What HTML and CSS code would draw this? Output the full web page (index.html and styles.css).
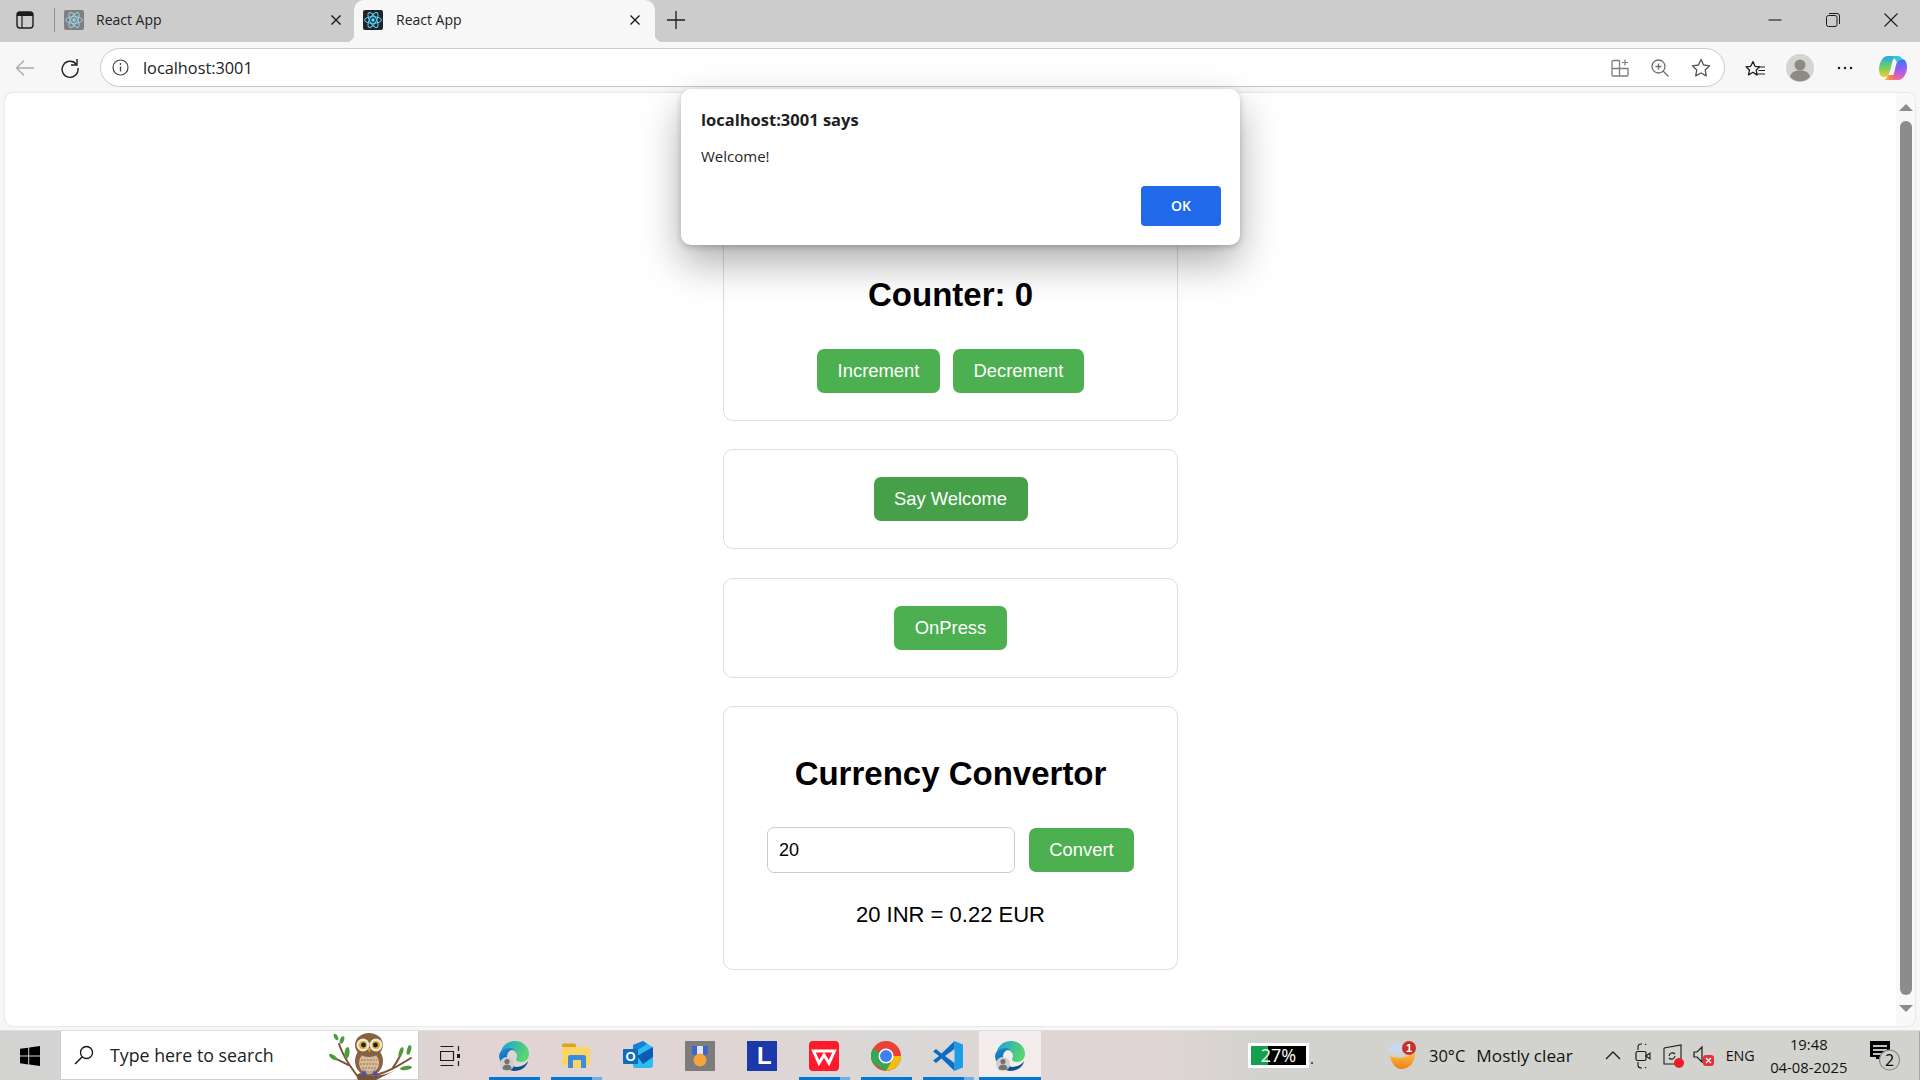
FILE: index.html
```html
<!DOCTYPE html>
<html lang="en">
<head>
  <meta charset="UTF-8" />
  <title>React App</title>
  <link rel="stylesheet" href="styles.css">
</head>
<body>
  <svg class="defs" width="0" height="0">
    <defs>
      <symbol id="react" viewBox="0 0 20 20">
        <rect width="20" height="20" rx="2" fill="#20232a"/>
        <g fill="none" stroke="#61dafb" stroke-width="1">
          <ellipse cx="10" cy="10" rx="8.4" ry="3.3"/>
          <ellipse cx="10" cy="10" rx="8.4" ry="3.3" transform="rotate(60 10 10)"/>
          <ellipse cx="10" cy="10" rx="8.4" ry="3.3" transform="rotate(120 10 10)"/>
        </g>
        <circle cx="10" cy="10" r="1.7" fill="#61dafb"/>
      </symbol>
      <linearGradient id="edgeTop" x1="0" y1="0" x2="1" y2="0.4">
        <stop offset="0" stop-color="#1a9fdd"/>
        <stop offset="1" stop-color="#5ad66f"/>
      </linearGradient>
      <linearGradient id="edgeLeft" x1="0" y1="0" x2="0.6" y2="1">
        <stop offset="0" stop-color="#1b8fd8"/>
        <stop offset="1" stop-color="#0f5ea8"/>
      </linearGradient>
      <symbol id="edge" viewBox="0 0 30 30">
        <path d="M2 10C4 4 9 0 16 0c8 0 14 6 14 13 0 5-4 8-8 8-3 0-5-1-5-2.500 0-1 1-1.500 1-3.500 0-4-4-6.500-8-6.500-3 0-6 0-8 1.500z" fill="url(#edgeTop)"/>
        <path d="M2 10c3-3 10-4 14-1-4-1-8 2-8 6.500 0 5 3 9 8 10.500-7 2-15-2-16-10.500 0-2 1-4 2-5.500z" fill="url(#edgeLeft)"/>
        <path d="M14 25.500c6 1.500 12-1 15-5.500-1 6-7 10-14 10-2 0-4-1-5-2z" fill="#0c4f94"/>
        <circle cx="8" cy="23" r="7" fill="#cfcfcf"/>
        <circle cx="8" cy="20.500" r="2.600" fill="#737373"/>
        <path d="M3.500 28c0-3 2-4.500 4.500-4.500s4.500 1.500 4.500 4.500c-2 1.500-7 1.500-9 0z" fill="#737373"/>
      </symbol>
    </defs>
  </svg>

  <div class="tabstrip">
    <button class="strip-icon sidebar-toggle">
      <svg width="18" height="18" viewBox="0 0 18 18"><rect x="1" y="1" width="16" height="16" rx="3" fill="none" stroke="#1c1c1c" stroke-width="1.400"/><path d="M1 5V4a3 3 0 0 1 3-3h10a3 3 0 0 1 3 3v1z" fill="#1c1c1c"/><path d="M6 5v12" stroke="#1c1c1c" stroke-width="1.200"/></svg>
    </button>
    <span class="tab-sep"></span>
    <div class="tab tab-idle">
      <svg class="favicon" width="20" height="20"><use href="#react"/></svg>
      <span class="tab-title">React App</span>
      <svg class="tab-close" width="12" height="12" viewBox="0 0 12 12"><path d="M1.500 1.500l9 9M10.500 1.500l-9 9" stroke="#1a1a1a" stroke-width="1.400"/></svg>
    </div>
    <div class="tab tab-active">
      <svg class="favicon" width="20" height="20"><use href="#react"/></svg>
      <span class="tab-title">React App</span>
      <svg class="tab-close" width="12" height="12" viewBox="0 0 12 12"><path d="M1.500 1.500l9 9M10.500 1.500l-9 9" stroke="#1a1a1a" stroke-width="1.400"/></svg>
    </div>
    <svg class="new-tab" width="18" height="18" viewBox="0 0 18 18"><path d="M9 0v18M0 9h18" stroke="#1c1c1c" stroke-width="1.300"/></svg>
    <div class="window-controls">
      <svg width="14" height="14" viewBox="0 0 14 14"><path d="M0.500 7h13" stroke="#1c1c1c" stroke-width="1.100"/></svg>
      <svg width="14" height="14" viewBox="0 0 14 14"><rect x="0.500" y="2.500" width="10.500" height="11" rx="2" fill="none" stroke="#1c1c1c"/><path d="M3 0.500h8a2.500 2.500 0 0 1 2.500 2.500v8" fill="none" stroke="#1c1c1c"/></svg>
      <svg width="14" height="14" viewBox="0 0 14 14"><path d="M0.500 0.500l13 13M13.500 0.500l-13 13" stroke="#1c1c1c" stroke-width="1.100"/></svg>
    </div>
  </div>

  <div class="toolbar">
    <svg class="tool-back" width="20" height="18" viewBox="0 0 20 18"><path d="M19 9H1.500M9 1.500L1.500 9 9 16.500" fill="none" stroke="#a9a9a9" stroke-width="1.300"/></svg>
    <svg class="tool-reload" width="20" height="20" viewBox="0 0 20 20"><path d="M16.500 6.500A8 8 0 1 0 18 10" fill="none" stroke="#1f1f1f" stroke-width="1.400"/><path d="M17 1v6h-6" fill="none" stroke="#1f1f1f" stroke-width="1.400"/></svg>
    <div class="omnibox">
      <svg width="17" height="17" viewBox="0 0 17 17"><circle cx="8.500" cy="8.500" r="7.500" fill="none" stroke="#444" stroke-width="1.200"/><path d="M8.500 7.500v5" stroke="#444" stroke-width="1.300"/><circle cx="8.500" cy="5" r="0.900" fill="#444"/></svg>
      <span class="url">localhost:3001</span>
      <div class="omni-actions">
        <svg width="18" height="18" viewBox="0 0 18 18"><path d="M8.500 1.500H2a1 1 0 0 0-1 1V16a1 1 0 0 0 1 1h14a1 1 0 0 0 1-1V9.500H1M8.500 1.500V17" fill="none" stroke="#7d7d7d" stroke-width="1.300"/><path d="M14 0.500v6M11 3.500h6" stroke="#7d7d7d" stroke-width="1.200"/></svg>
        <svg width="18" height="18" viewBox="0 0 18 18"><circle cx="7.500" cy="7.500" r="6.500" fill="none" stroke="#6d6d6d" stroke-width="1.300"/><path d="M12 12l5.500 5.500M7.500 4.500v6M4.500 7.500h6" stroke="#6d6d6d" stroke-width="1.300"/></svg>
        <svg width="20" height="20" viewBox="0 0 20 20"><path d="M10 1.500l2.600 5.500 6 .8-4.400 4.100 1.100 6L10 15l-5.300 2.900 1.100-6L1.400 7.800l6-.8z" fill="none" stroke="#555" stroke-width="1.300" stroke-linejoin="round"/></svg>
      </div>
    </div>
    <div class="tool-actions">
      <svg class="tool-fav" width="20" height="20" viewBox="0 0 20 20"><path d="M8 1.500l2 4.800 4.600.5-3.400 3.300.9 5L8 12.300l-4.500 2.600 1-5L1 6.800l4.700-.5z" fill="none" stroke="#1f1f1f" stroke-width="1.300" stroke-linejoin="round" transform="translate(0 2)"/><path d="M13 9h7M13.500 12.500h6.500M12 16h8" stroke="#1f1f1f" stroke-width="1.200"/></svg>
      <svg class="tool-avatar" width="28" height="28" viewBox="0 0 28 28"><circle cx="14" cy="14" r="14" fill="#d6d4d0"/><circle cx="14" cy="11" r="5.500" fill="#8e8a85"/><path d="M4 23c1-5 5-6.500 10-6.500S23 18 24 23a14 14 0 0 1-20 0z" fill="#8e8a85"/></svg>
      <svg class="tool-more" width="16" height="4" viewBox="0 0 16 4"><circle cx="2" cy="2" r="1.300" fill="#222"/><circle cx="8" cy="2" r="1.300" fill="#222"/><circle cx="14" cy="2" r="1.300" fill="#222"/></svg>
      <svg class="tool-copilot" width="28" height="28" viewBox="0 0 28 28">
        <defs>
          <linearGradient id="copA" x1="0" y1="0" x2="0" y2="1"><stop offset="0" stop-color="#28a8ea"/><stop offset="0.55" stop-color="#6fd35c"/><stop offset="1" stop-color="#f8c62e"/></linearGradient>
          <linearGradient id="copB" x1="0" y1="0" x2="0" y2="1"><stop offset="0" stop-color="#2f7bf2"/><stop offset="0.55" stop-color="#a25cf0"/><stop offset="1" stop-color="#f86a9a"/></linearGradient>
          <linearGradient id="copC" x1="0" y1="0" x2="1" y2="0"><stop offset="0" stop-color="#f6b23c"/><stop offset="1" stop-color="#f0556f"/></linearGradient>
        </defs>
        <path d="M9 2h9c-3 1-4 3-5 7l-2 8c-1 4-3 6-6 6-3 0-5-3-5-8 0-5 3-13 9-13z" fill="url(#copA)"/>
        <path d="M19 26h-9c3-1 4-3 5-7l2-8c1-4 3-6 6-6 3 0 5 3 5 8 0 5-3 13-9 13z" fill="url(#copB)"/>
        <path d="M9 21h9c-1 3-4 5-7 5H6c1-1 2-3 3-5z" fill="url(#copC)"/>
        <path d="M12 2h7c2 0 3 1 4 3-2 0-4 1-5 4-1-3-3-6-6-7z" fill="#2fc6d8"/>
      </svg>
    </div>
  </div>

  <div class="viewport">
    <main class="page">
      <section class="card card-counter">
        <h2>Counter: 0</h2>
        <div class="row">
          <button class="btn btn-increment">Increment</button>
          <button class="btn btn-decrement">Decrement</button>
        </div>
      </section>
      <section class="card card-plain">
        <button class="btn btn-hover">Say Welcome</button>
      </section>
      <section class="card card-plain">
        <button class="btn btn-press">OnPress</button>
      </section>
      <section class="card card-currency">
        <h2>Currency Convertor</h2>
        <div class="row row-wide">
          <input class="amount" type="text" value="20">
          <button class="btn btn-convert">Convert</button>
        </div>
        <p class="result">20 INR = 0.22 EUR</p>
      </section>
    </main>
    <div class="scrollbar">
      <span class="arrow arrow-up"></span>
      <span class="thumb"></span>
      <span class="arrow arrow-down"></span>
    </div>
  </div>

  <div class="dialog">
    <div class="dialog-title">localhost:3001 says</div>
    <div class="dialog-msg">Welcome!</div>
    <button class="dialog-ok">OK</button>
  </div>

  <footer class="taskbar">
    <div class="start">
      <svg width="20" height="20" viewBox="0 0 20 20"><path d="M0 2.800l8.200-1.100v7.900H0zM9.200 1.500L20 0v9.600H9.200zM0 10.600h8.200v7.900L0 17.300zM9.200 10.600H20V20L9.200 18.500z" fill="#000"/></svg>
    </div>
    <div class="search">
      <svg width="20" height="20" viewBox="0 0 20 20"><circle cx="12.500" cy="7.500" r="6" fill="none" stroke="#111" stroke-width="1.300"/><path d="M8 12l-7 7" stroke="#111" stroke-width="1.500"/></svg>
      <span class="search-text">Type here to search</span>
      <svg class="owl" width="90" height="50" viewBox="0 0 90 50">
        <path d="M34 50C28 40 20 34 13 14M22 35C17 32 12 30 8 28M50 45C62 42 72 36 85 28M66 39c3-4 6-9 8-13" fill="none" stroke="#7a5236" stroke-width="2" stroke-linecap="round"/>
        <path d="M32 50c-3-6 0-8 8-6 10 3 20 1 30-4l-20 10z" fill="#7a5236"/>
        <g fill="#4e9a3c">
          <ellipse cx="10" cy="7" rx="1.800" ry="3.500" transform="rotate(-30 10 7)"/>
          <ellipse cx="16" cy="10" rx="2" ry="4" transform="rotate(20 16 10)"/>
          <ellipse cx="7" cy="27" rx="2" ry="4.500" transform="rotate(-55 7 27)"/>
          <ellipse cx="21" cy="23" rx="2.500" ry="6" transform="rotate(8 21 23)"/>
          <ellipse cx="75" cy="22" rx="2" ry="5" transform="rotate(18 75 22)"/>
          <ellipse cx="83" cy="20" rx="2" ry="5" transform="rotate(15 83 20)"/>
          <ellipse cx="80" cy="38" rx="6" ry="2" transform="rotate(-8 80 38)"/>
        </g>
        <ellipse cx="43" cy="31" rx="14" ry="15" fill="#8a6142"/>
        <ellipse cx="43" cy="33" rx="10" ry="11" fill="#d8bb98"/>
        <path d="M35 30h16M34 34h18M36 38h14M38 42h10" stroke="#9a7452" stroke-width="1" stroke-dasharray="2 1"/>
        <ellipse cx="43" cy="15" rx="14" ry="12" fill="#86603f"/>
        <ellipse cx="37" cy="15" rx="6.500" ry="6.500" fill="#efe6d8"/>
        <ellipse cx="50" cy="15" rx="6.500" ry="6.500" fill="#efe6d8"/>
        <circle cx="37" cy="15" r="4" fill="#d9b11f"/>
        <circle cx="50" cy="15" r="4" fill="#d9b11f"/>
        <circle cx="37.500" cy="15" r="2.400" fill="#1b1f33"/>
        <circle cx="49.500" cy="15" r="2.400" fill="#1b1f33"/>
        <path d="M41.500 18h3.500l-1.700 5z" fill="#d6a035"/>
        <path d="M36 45l1 -3 1 3 1-3 1 3M47 45l1-3 1 3 1-3 1 3" fill="none" stroke="#4a52a8" stroke-width="1.600"/>
      </svg>
    </div>
    <div class="tile tile-taskview">
      <svg width="20" height="20" viewBox="0 0 20 20"><path d="M0.500 0.500h13M0.500 19.500h13M0.500 5.500h13v9h-13z" fill="none" stroke="#1a1a1a" stroke-width="1.200"/><path d="M18.500 0v5M18.500 15v5" stroke="#1a1a1a" stroke-width="1.200"/><path d="M17 8h3v4h-3z" fill="#1a1a1a"/></svg>
    </div>
    <div class="tile tile-on"><svg width="30" height="30"><use href="#edge"/></svg></div>
    <div class="tile tile-on tile-multi">
      <svg width="30" height="30" viewBox="0 0 30 30"><path d="M1 4.500A1.500 1.500 0 0 1 2.500 3h11l3 3h10A2.500 2.500 0 0 1 29 8.500V23a2 2 0 0 1-2 2H3a2 2 0 0 1-2-2z" fill="#fbd667"/><path d="M1 6V4a1.500 1.500 0 0 1 1.500-1.500H13a2 2 0 0 1 2 2V6z" fill="#e0a419"/><path d="M7 27V16a2 2 0 0 1 2-2h14a2 2 0 0 1 2 2v11h-5v-8h-8v8z" fill="#3a8dde"/><path d="M12 19h8v8h-8z" fill="#fbd667"/></svg>
    </div>
    <div class="tile">
      <svg width="30" height="30" viewBox="0 0 30 30"><path d="M10 4l10-4 8 5c1.500 1 2 2 2 4v15c0 2-1 3-3 3H12c-2 0-2-2-2-3z" fill="#2dbcf2"/><path d="M10 4l10-4 4 3-14 9z" fill="#1a7fd4"/><path d="M14 15L30 6v10L20 23z" fill="#0a5cb5"/><rect y="8" width="15" height="15" rx="1" fill="#0f6cbd"/><text x="7.500" y="20" class="svg-o">O</text></svg>
    </div>
    <div class="tile">
      <svg width="30" height="30" viewBox="0 0 30 30"><rect width="30" height="30" fill="#7c7c7c"/><path d="M7 5h16v7l-5 5h-6l-5-5z" fill="#3f63cf"/><path d="M12 5h6v11h-6z" fill="#dfe6f7"/><circle cx="15" cy="19" r="6.500" fill="#f6a339"/></svg>
    </div>
    <div class="tile">
      <div class="app-l">L</div>
    </div>
    <div class="tile tile-on tile-multi">
      <svg width="30" height="30" viewBox="0 0 30 30"><rect width="30" height="30" rx="4" fill="#ff1a2c"/><path d="M4.500 10L10 22l5-8 5 8 5.500-12z" fill="none" stroke="#fff" stroke-width="3" stroke-linejoin="miter"/></svg>
    </div>
    <div class="tile tile-on">
      <svg width="30" height="30" viewBox="0 0 30 30"><circle cx="15" cy="15" r="15" fill="#ea4335"/><path d="M15 15L2 22.500A15 15 0 0 1 2 7.500z" fill="#34a853"/><path d="M15 15h15a15 15 0 0 1-15 15L2 22.500z" fill="#34a853"/><path d="M15 15h15a15 15 0 0 1-15 15l7.500-13z" fill="#fbbc05"/><circle cx="15" cy="15" r="7.500" fill="#fff"/><circle cx="15" cy="15" r="6" fill="#3f7ff0"/></svg>
    </div>
    <div class="tile tile-on tile-multi">
      <svg width="30" height="30" viewBox="0 0 30 30"><path d="M21.500 0L30 3.500v23L21.500 30z" fill="#1e9ce8"/><path d="M21.500 0L8.500 12.500 3 8 0 10.500 6 15l-6 4.500L3 22l5.500-4.500L21.500 30v-8L12 15l9.500-7z" fill="#0a6fc2"/></svg>
    </div>
    <div class="tile tile-on tile-current"><svg width="30" height="30"><use href="#edge"/></svg></div>

    <div class="tray">
      <div class="battery"><span>27%</span></div>
      <span class="battery-dot"></span>
      <svg class="weather" width="30" height="30" viewBox="0 0 30 30">
        <defs><linearGradient id="sun" x1="0" y1="0" x2="0" y2="1"><stop offset="0" stop-color="#fbbf3f"/><stop offset="1" stop-color="#f07f1c"/></linearGradient></defs>
        <path d="M2 15c6 3 16 2 25-3 0 9-5 16-14 16C7 28 3 21 2 15z" fill="url(#sun)"/>
        <path d="M1 8a3 3 0 0 1 3-3c1-3 7-4 8 0 2 0 4 1 4 3 0 2-1 3-3 3H4a3 3 0 0 1-3-3z" fill="#c5d9f1"/>
        <circle cx="21" cy="7" r="7" fill="#c9302c"/>
        <text x="21" y="11" class="svg-badge">1</text>
      </svg>
      <span class="temp">30°C</span>
      <span class="sky">Mostly clear</span>
      <svg class="caret" width="16" height="9" viewBox="0 0 16 9"><path d="M1 8l7-7 7 7" fill="none" stroke="#1a1a1a" stroke-width="1.300"/></svg>
      <svg class="meet" width="16" height="26" viewBox="0 0 16 26"><path d="M3 7V4a3 3 0 0 1 3-3h1M3 19v3a3 3 0 0 0 3 3h1M10 1a3 3 0 0 1 1 1M10 25a3 3 0 0 0 1-1" fill="none" stroke="#1a1a1a" stroke-width="1.100"/><rect x="1" y="8.500" width="10" height="9" rx="1.500" fill="none" stroke="#1a1a1a" stroke-width="1.200"/><path d="M11 13l4-3v6z" fill="none" stroke="#1a1a1a" stroke-width="1.100"/></svg>
      <svg class="sync" width="22" height="26" viewBox="0 0 22 26"><path d="M1 5l17-3v15" fill="none" stroke="#1a1a1a" stroke-width="1.100"/><path d="M1 5v16h11" fill="none" stroke="#1a1a1a" stroke-width="1.100"/><path d="M6 13a3.500 3.500 0 0 1 6-2M12 13a3.500 3.500 0 0 1-6 2" fill="none" stroke="#1a1a1a" stroke-width="1.100"/><circle cx="16" cy="20" r="5" fill="#ee1c25"/></svg>
      <svg class="speaker" width="22" height="22" viewBox="0 0 22 22"><path d="M1 7h3l5-5v15l-5-5H1z" fill="none" stroke="#1a1a1a" stroke-width="1.200"/><rect x="10" y="10" width="11" height="11" rx="3" fill="#e3303a"/><path d="M13 13l5 5M18 13l-5 5" stroke="#fff" stroke-width="1.300"/></svg>
      <span class="lang">ENG</span>
      <div class="clock"><span>19:48</span><span>04-08-2025</span></div>
      <svg class="notify" width="32" height="32" viewBox="0 0 32 32"><path d="M0 1h20v18H6v-2H0z" fill="#000"/><path d="M3 6h14M3 10h14M3 14h14" stroke="#fff" stroke-width="1.300"/><circle cx="19.500" cy="20" r="10" fill="#cfd0cc" stroke="#8a8a8a" stroke-width="1.200"/><text x="19.500" y="26" class="svg-two">2</text></svg>
    </div>
  </footer>
</body>
</html>
```

FILE: styles.css
```css
* {
  box-sizing: border-box;
}

html, body {
  margin: 0;
  height: 100%;
}

body {
  width: 1920px;
  height: 1080px;
  overflow: hidden;
  display: flex;
  flex-direction: column;
  background: #f7f7f7;
  font-family: "Liberation Sans", Arial, sans-serif;
  position: relative;
}

svg {
  display: block;
  flex: none;
}

.defs {
  position: absolute;
}

/* tab strip */
.tabstrip {
  height: 42px;
  flex: none;
  display: flex;
  align-items: center;
  padding-bottom: 2px;
  background: #cccccc;
  font-family: "Open Sans", "Noto Sans", sans-serif;
}

.strip-icon {
  width: 16px;
  height: 18px;
  margin-left: 16px;
  padding: 0;
  border: none;
  background: none;
}

.tab-sep {
  width: 1px;
  height: 24px;
  margin-left: 22px;
  background: #8c8c8c;
}

.tab {
  width: 299px;
  height: 42px;
  margin-bottom: -2px;
  display: flex;
  align-items: center;
  padding: 0 12px 3px 9px;
  font-size: 14px;
  color: #222;
  flex: none;
}

.tab-idle .favicon {
  opacity: 0.45;
}

.tab-active {
  width: 301px;
  padding-right: 14px;
  background: #f7f7f7;
  border-radius: 10px 10px 0 0;
  position: relative;
}

.tab-active::before,
.tab-active::after {
  content: "";
  position: absolute;
  bottom: 0;
  width: 8px;
  height: 8px;
}

.tab-active::before {
  left: -8px;
  background: radial-gradient(circle at 0 0, transparent 8px, #f7f7f7 8.500px);
}

.tab-active::after {
  right: -8px;
  background: radial-gradient(circle at 100% 0, transparent 8px, #f7f7f7 8.500px);
}

.tab-title {
  margin-left: 13px;
  flex: 1;
}

.tab-idle .tab-title {
  margin-left: 12px;
}

.new-tab {
  margin-left: 12px;
}

.window-controls {
  margin-left: auto;
  margin-right: 22px;
  display: flex;
  gap: 44px;
}

/* toolbar */
.toolbar {
  height: 51px;
  flex: none;
  display: flex;
  align-items: center;
}

.tool-back {
  margin-left: 15px;
}

.tool-reload {
  margin-left: 25px;
}

.omnibox {
  width: 1625px;
  height: 39px;
  margin-left: 20px;
  display: flex;
  align-items: center;
  padding: 0 13px 0 11px;
  background: #fff;
  border: 1px solid #c9c9c9;
  border-radius: 20px;
}

.url {
  margin-left: 14px;
  font-family: "Open Sans", "Noto Sans", sans-serif;
  font-size: 16.300px;
  color: #222;
}

.omni-actions {
  margin-left: auto;
  display: flex;
  align-items: center;
  gap: 22px;
}

.tool-actions {
  display: flex;
  align-items: center;
}

.tool-fav {
  margin-left: 20px;
}

.tool-avatar {
  margin-left: 21px;
}

.tool-more {
  margin-left: 23px;
}

.tool-copilot {
  margin-left: 26px;
}

/* page */
.viewport {
  height: 933px;
  flex: none;
  margin: 0 5px 0 5px;
  display: flex;
  background: #fff;
  border-radius: 8px;
  box-shadow: 0 0 2px rgba(0,0,0,0.2);
  overflow: hidden;
}

.page {
  flex: 1;
  padding-top: 134px;
  display: flex;
  flex-direction: column;
  align-items: center;
  gap: 28.500px;
}

.scrollbar {
  width: 19px;
  flex: none;
  display: flex;
  flex-direction: column;
  align-items: center;
  background: #f9f9f9;
}

.thumb {
  width: 12px;
  height: 874px;
  margin: 10px 0 10px;
  border-radius: 6px;
  background: #8c8c8c;
}

.arrow {
  width: 0;
  height: 0;
  border-left: 7px solid transparent;
  border-right: 7px solid transparent;
}

.arrow-up {
  margin-top: 11px;
  border-bottom: 7px solid #8c8c8c;
}

.arrow-down {
  border-top: 7px solid #8c8c8c;
}

.card {
  width: 455px;
  border: 1px solid #dddddd;
  border-radius: 10px;
  display: flex;
  flex-direction: column;
  align-items: center;
  background: transparent;
}

.card h2 {
  margin: 0;
  font-size: 33px;
  line-height: 38px;
  font-weight: 700;
  color: #000;
}

.card-counter {
  height: 193.500px;
  padding-top: 48px;
}

.card-counter h2 {
  margin-bottom: 35px;
}

.card-plain {
  height: 100px;
  justify-content: center;
}

.card-currency {
  height: 264px;
  padding-top: 48px;
}

.card-currency h2 {
  margin-bottom: 34px;
}

.row {
  display: flex;
  align-items: center;
  justify-content: center;
  gap: 13px;
}

.row-wide {
  gap: 14px;
}

.btn {
  height: 44px;
  padding: 0;
  border: none;
  border-radius: 7px;
  background: #4caf50;
  color: #fff;
  font-family: "Liberation Sans", Arial, sans-serif;
  font-size: 18.400px;
}

.btn-increment {
  width: 123px;
}

.btn-decrement {
  width: 131px;
}

.btn-hover {
  width: 154px;
  background: #45a049;
}

.btn-press {
  width: 113px;
}

.btn-convert {
  width: 105px;
}

.amount {
  width: 248px;
  height: 46px;
  padding: 0 11px;
  border: 1px solid #cccccc;
  border-radius: 7px;
  font-family: "Liberation Sans", Arial, sans-serif;
  font-size: 18px;
  color: #000;
  outline: none;
}

.result {
  margin: 29px 0 0;
  font-size: 22px;
  line-height: 26px;
  color: #000;
}

/* alert */
.dialog {
  position: absolute;
  left: 681px;
  top: 89px;
  width: 559px;
  height: 156px;
  padding: 20px 19px 19px 20px;
  display: flex;
  flex-direction: column;
  background: #fff;
  border-radius: 10px;
  box-shadow: 0 18px 40px rgba(0,0,0,0.32), 0 2px 6px rgba(0,0,0,0.2);
  font-family: "Open Sans", "Noto Sans", sans-serif;
  color: #1f1f1f;
}

.dialog-title {
  font-size: 16.500px;
  line-height: 22px;
  font-weight: 700;
}

.dialog-msg {
  margin-top: 15px;
  font-size: 15px;
  line-height: 20px;
}

.dialog-ok {
  margin-top: auto;
  align-self: flex-end;
  width: 80px;
  height: 40px;
  padding: 0 0 2px;
  border: none;
  border-radius: 4px;
  background: #2169eb;
  color: #fff;
  font-family: "Open Sans", "Noto Sans", sans-serif;
  font-size: 14px;
  font-weight: 600;
}

/* taskbar */
.taskbar {
  height: 50px;
  margin-top: 4px;
  flex: none;
  display: flex;
  align-items: stretch;
  background: linear-gradient(90deg, #d3d4d2 0, #d6d3d2 320px, #e2d4d4 480px, #e0d4d4 700px, #d9d8d6 880px, #e0d4d4 1080px, #ddd5d3 1180px, #d2d3ce 1260px, #d2d3ce 100%);
  border-top: 1px solid #dedede;
  font-family: "Open Sans", "Noto Sans", sans-serif;
  color: #111;
}

.start {
  width: 60px;
  display: flex;
  align-items: center;
  justify-content: center;
}

.search {
  width: 359px;
  display: flex;
  align-items: center;
  padding-left: 13px;
  background: #fff;
  border: 1px solid #cfcfcf;
  border-top: none;
}

.search-text {
  margin-left: 16px;
  font-size: 17.800px;
  color: #222;
}

.owl {
  margin-left: auto;
  margin-right: 2px;
}

.tile {
  width: 62px;
  display: flex;
  align-items: center;
  justify-content: center;
}

.tile-taskview {
  margin-left: 2px;
  padding-right: 4px;
}

.tile-on {
  background: linear-gradient(#0078d4, #0078d4) center bottom / 51px 3px no-repeat;
}

.tile-multi {
  background: linear-gradient(90deg, #0078d4 80%, #6cb0e8 80%) center bottom / 51px 3px no-repeat;
}

.tile-current {
  background: linear-gradient(#0078d4, #0078d4) center bottom / 100% 3px no-repeat, #f2ecec;
}

.app-l {
  width: 30px;
  height: 30px;
  padding-left: 10px;
  background: #1c39a9;
  color: #fff;
  font-family: "Liberation Sans", Arial, sans-serif;
  font-size: 24px;
  font-weight: 700;
  line-height: 30px;
}

.svg-o {
  fill: #fff;
  font-family: "Liberation Sans", Arial, sans-serif;
  font-size: 13px;
  font-weight: 700;
  text-anchor: middle;
}

.svg-badge {
  fill: #fff;
  font-family: "Liberation Sans", Arial, sans-serif;
  font-size: 11px;
  font-weight: 700;
  text-anchor: middle;
}

.svg-two {
  fill: #000;
  font-family: "Open Sans", sans-serif;
  font-size: 16px;
  text-anchor: middle;
}

.tray {
  margin-left: auto;
  width: 672px;
  display: flex;
  align-items: center;
  border-right: 1px solid #a9a9a9;
}

.battery {
  width: 61px;
  height: 25px;
  border: 3px solid #fff;
  background: linear-gradient(90deg, #16a04d 17px, #000 17px);
  color: #fff;
  font-size: 18px;
  line-height: 19px;
  text-align: center;
}

.battery-dot {
  width: 2px;
  height: 2px;
  margin: 14px 0 0 2px;
  background: #555;
}

.weather {
  margin-left: 75px;
}

.temp {
  margin-left: 11px;
  font-size: 16.500px;
}

.sky {
  margin-left: 11px;
  font-size: 17.200px;
}

.caret {
  margin-left: 32px;
}

.meet {
  margin-left: 14px;
}

.sync {
  margin-left: 12px;
}

.speaker {
  margin-left: 8px;
}

.lang {
  margin-left: 11px;
  font-size: 14.300px;
}

.clock {
  width: 78px;
  margin-left: 15px;
  display: flex;
  flex-direction: column;
  align-items: center;
  gap: 5px;
  font-size: 14.800px;
  line-height: 18px;
}

.notify {
  margin-left: 22px;
}
```
